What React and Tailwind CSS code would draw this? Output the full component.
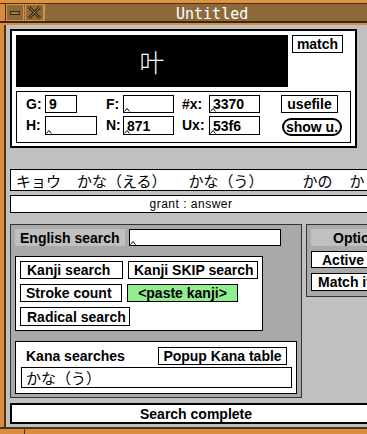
import React from 'react'

const ui = "font-['Liberation_Sans',Arial,sans-serif] font-bold text-[14px] text-black"
const jp = "font-['Noto_Sans_CJK_JP','Noto_Sans_CJK_SC',sans-serif] text-[15px] text-black"

function Caret() {
  return (
    <svg className="absolute left-[0px] bottom-[0px]" width="6" height="5" viewBox="0 0 6 5">
      <path d="M0.5 4.5 L3 1.5 L5.5 4.5" stroke="#000" strokeWidth="1" fill="none" />
    </svg>
  )
}

function Field({ w, h = 18, value, caret = true }) {
  return (
    <div className={`relative bg-white border border-black flex items-center pl-[3px] leading-none ${ui}`} style={{ width: w, height: h }}>
      {caret && <Caret />}
      {value}
    </div>
  )
}

function Btn({ children, className = '' }) {
  return (
    <div className={`bg-white border border-black flex items-center leading-none ${ui} ${className}`}>
      {children}
    </div>
  )
}

export default function App() {
  return (
    <div className="w-[367px] h-[434px] overflow-hidden bg-[#d98b3f] flex flex-col">
      {/* title bar */}
      <div className="h-[25px] shrink-0 flex flex-col">
        <div className="h-[4px] bg-[#e0933f] border-b border-[#4a3214]" />
        <div className="h-[19px] bg-[#8c6a3b] flex border-b-2 border-[#3b2810]">
          <div className="w-[6px] bg-[#d98b3f] border-r border-[#4a3214]" />
          <div className="w-[18px] border border-[#d9923f] flex items-center justify-center">
            <div className="w-[10px] h-[4px] border border-[#3b2810] bg-[#a37d48]" />
          </div>
          <div className="w-[19px] ml-[1px] border border-[#d9923f] flex items-center justify-center">
            <svg width="15" height="15" viewBox="0 0 15 15">
              <path d="M2 2 L13 13 M13 2 L2 13" stroke="#3b2810" strokeWidth="3" fill="none" />
              <path d="M2 2 L13 13 M13 2 L2 13" stroke="#a37d48" strokeWidth="1" fill="none" />
            </svg>
          </div>
          <div className="flex-1 border-l border-[#d9923f] flex items-center pl-[131px] pt-[3px] text-white text-[15px] font-['DejaVu_Sans_Mono',monospace] leading-none">
            Untitled
          </div>
        </div>
      </div>

      {/* body */}
      <div className="flex-1 flex">
        <div className="w-[6px] shrink-0 bg-[#d98b3f] border-r-2 border-[#4a3214]" />
        <div className="flex-1 bg-[#c0c0c0] flex flex-col min-w-0">
          {/* top panel */}
          <div className="ml-[4px] mt-[4px] w-[347px] h-[119px] shrink-0 bg-white border-2 border-black pl-[4px] pt-[4px] flex flex-col">
            <div className="flex gap-[4px]">
              <div className="w-[272px] h-[52px] bg-black flex items-center justify-center text-white text-[25px] leading-none font-['Noto_Sans_CJK_JP',sans-serif] font-light">
                叶
              </div>
              <Btn className="w-[51px] h-[18px] justify-center">match</Btn>
            </div>
            <div className="mt-[4px] w-[335px] h-[52px] border border-black flex flex-col pt-[3px]">
              <div className={`flex items-center h-[18px] pl-[9px] ${ui}`}>
                <span className="w-[19px]">G:</span>
                <Field w={32} value="9" caret={false} />
                <span className="w-[29px]" />
                <span className="w-[17px]">F:</span>
                <Field w={51} />
                <span className="w-[8px]" />
                <span className="w-[27px]">#x:</span>
                <Field w={51} value="3370" />
                <span className="w-[21px]" />
                <Btn className="w-[57px] h-[18px] justify-center">usefile</Btn>
              </div>
              <div className={`flex items-center h-[19px] mt-[3px] pl-[9px] ${ui}`}>
                <span className="w-[19px]">H:</span>
                <Field w={52} h={19} />
                <span className="w-[9px]" />
                <span className="w-[17px]">N:</span>
                <Field w={51} h={19} value="871" />
                <span className="w-[8px]" />
                <span className="w-[27px]">Ux:</span>
                <Field w={51} h={19} value="53f6" />
                <span className="w-[22px]" />
                <Btn className="w-[60px] h-[18px] mt-[3px] justify-center rounded-full border-2">show u.</Btn>
              </div>
            </div>
          </div>

          {/* kana line */}
          <div className={`ml-[4px] mt-[21px] w-[380px] h-[22px] shrink-0 bg-white border border-black flex items-center whitespace-nowrap leading-none ${jp}`}>
            <span className="ml-[5px]">キョウ</span>
            <span className="ml-[16px]">かな（える）</span>
            <span className="ml-[22px]">かな（う）</span>
            <span className="ml-[39px]">かの</span>
            <span className="ml-[17px]">か</span>
          </div>
          <div className="ml-[4px] mt-[4px] w-[362px] h-[18px] shrink-0 bg-white border border-black flex items-center justify-center text-[12px] tracking-[0.5px] leading-none font-['Liberation_Sans',sans-serif] text-black">
            grant : answer
          </div>

          {/* lower area */}
          <div className="ml-[4px] mt-[11px] flex gap-[4px] items-start">
            <div className="w-[292px] h-[174px] shrink-0 bg-[#a9a9a9] border border-[#333] pl-[4px] pt-[4px] flex flex-col">
              <div className="flex gap-[4px]">
                <div className={`w-[110px] h-[17px] bg-[#c0c0c0] flex items-center pl-[5px] leading-none ${ui}`}>English search</div>
                <Field w={152} h={17} />
              </div>
              <div className="mt-[10px] w-[248px] h-[75px] bg-white border border-black pl-[4px] pt-[4px] flex flex-col gap-[5px]">
                <div className="flex gap-[5px]">
                  <Btn className="w-[103px] h-[18px] pl-[6px]">Kanji search</Btn>
                  <Btn className="w-[130px] h-[18px] pl-[5px]">Kanji SKIP search</Btn>
                </div>
                <div className="flex gap-[5px]">
                  <Btn className="w-[102px] h-[18px] pl-[5px]">Stroke count</Btn>
                  <Btn className="w-[111px] h-[18px] justify-center !bg-[#90ee90]">&lt;paste kanji&gt;</Btn>
                </div>
                <div className="flex">
                  <Btn className="w-[110px] h-[19px] pl-[6px]">Radical search</Btn>
                </div>
              </div>
              <div className="mt-[10px] w-[282px] h-[53px] bg-white border border-black pl-[5px] pt-[5px] flex flex-col">
                <div className="flex items-center">
                  <span className={`w-[137px] pl-[5px] leading-none ${ui}`}>Kana searches</span>
                  <Btn className="w-[129px] h-[18px] justify-center">Popup Kana table</Btn>
                </div>
                <div className={`mt-[2px] w-[271px] h-[21px] border border-black flex items-center pl-[4px] leading-none ${jp}`}>
                  かな（う）
                </div>
              </div>
            </div>
            <div className="w-[120px] h-[73px] shrink-0 bg-[#a9a9a9] border border-[#333] pl-[4px] pt-[4px] flex flex-col gap-[5px]">
              <div className={`h-[17px] bg-[#c0c0c0] flex items-center pl-[22px] leading-none ${ui}`}>Options</div>
              <Btn className="h-[17px] pl-[10px]">Active</Btn>
              <Btn className="h-[18px] pl-[6px]">Match items</Btn>
            </div>
          </div>

          {/* status */}
          <div className={`ml-[4px] mt-[5px] w-[372px] h-[21px] shrink-0 bg-white border-2 border-black flex items-center justify-center leading-none ${ui}`}>
            Search complete
          </div>
        </div>
      </div>

      {/* bottom frame */}
      <div className="h-[7px] shrink-0 bg-[#d98b3f] border-t-2 border-[#4a3214] flex">
        <div className="w-[25px] border-r border-[#4a3214]" />
      </div>
    </div>
  )
}
